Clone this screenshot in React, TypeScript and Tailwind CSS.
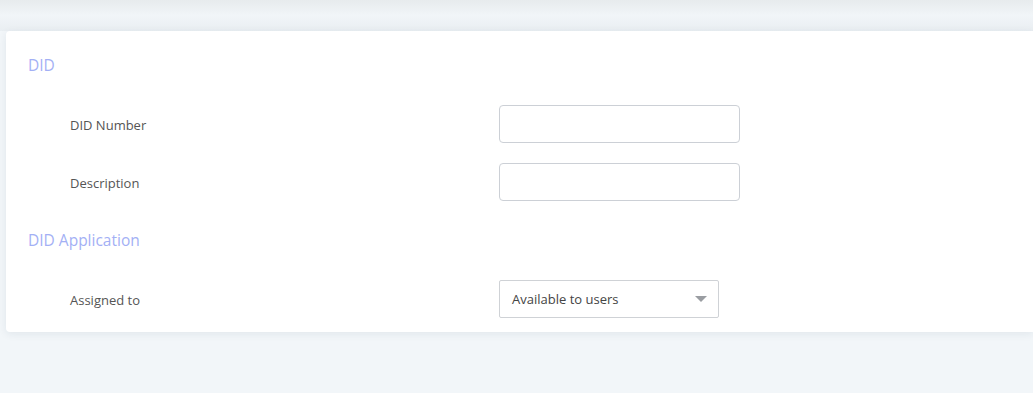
export default function App() {
  const font = { fontFamily: '"Open Sans", "Noto Sans", sans-serif' };

  return (
    <div className="w-[1033px] h-[393px] bg-[#f2f6f9] overflow-hidden" style={font}>
      {/* top strip */}
      <div className="h-[31px] bg-gradient-to-b from-[#e7ebed] via-[#f1f5f8] to-[#e9eef2]" />

      <div className="pl-[6px]">
        <div className="bg-white rounded-l-[4px] shadow-[0_2px_8px_rgba(30,50,80,0.08)] h-[301px] pt-[24px]">
          {/* DID section */}
          <h2 className="pl-[22px] text-[15.5px] leading-[20px] text-[#a3b0f5]">DID</h2>

          <div className="mt-[30px] flex items-center h-[38px]">
            <label className="w-[493px] pl-[64px] pt-[3px] text-[13px] text-[#555]">DID Number</label>
            <input className="w-[241px] h-[38px] border border-[#ccd0d6] rounded-[4px] outline-none" />
          </div>

          <div className="mt-[20px] flex items-center h-[38px]">
            <label className="w-[493px] pl-[64px] pt-[3px] text-[13px] text-[#555]">Description</label>
            <input className="w-[241px] h-[38px] border border-[#ccd0d6] rounded-[4px] outline-none" />
          </div>

          {/* DID Application section */}
          <h2 className="mt-[29px] pl-[22px] text-[15.5px] leading-[20px] text-[#a3b0f5]">DID Application</h2>

          <div className="mt-[30px] flex items-center h-[38px]">
            <label className="w-[493px] pl-[64px] pt-[3px] text-[13px] text-[#555]">Assigned to</label>
            <div className="w-[220px] h-[38px] border border-[#cfd2d6] rounded-[2px] flex items-center justify-between pl-[12px] pr-[11px]">
              <span className="pt-[1px] text-[13px] text-[#444]">Available to users</span>
              <span className="w-0 h-0 border-l-[6px] border-r-[6px] border-t-[6px] border-l-transparent border-r-transparent border-t-[#9a9da2]" />
            </div>
          </div>
        </div>
      </div>
    </div>
  );
}
